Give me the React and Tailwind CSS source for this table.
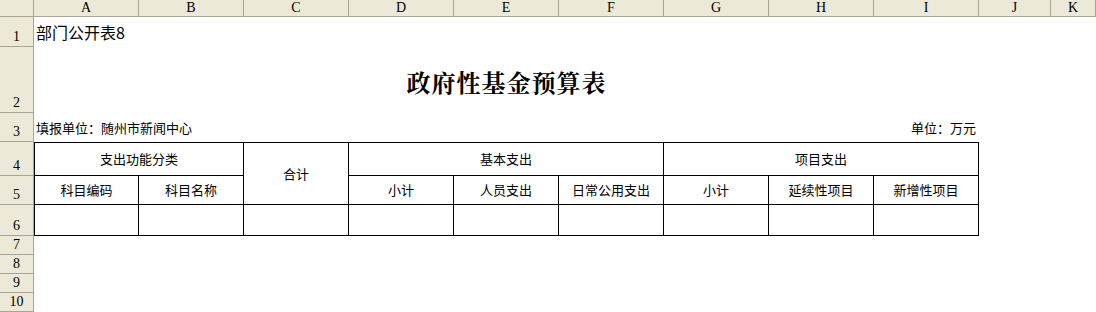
const COLS = ['A', 'B', 'C', 'D', 'E', 'F', 'G', 'H', 'I', 'J', 'K'];
const ROWS = [1, 2, 3, 4, 5, 6, 7, 8, 9, 10];

const cjk = { fontFamily: '"Noto Sans CJK SC", "Noto Sans", sans-serif' };
const head = { fontFamily: '"Liberation Serif", serif' };

function RowHead({ n, row }) {
  return (
    <div
      className={`${row} col-start-1 flex items-end justify-center bg-[#ECE9D8] border-r border-b border-[#A8A595] text-[14px] leading-[16px] text-black pb-[1px]`}
      style={head}
    >
      {n}
    </div>
  );
}

function Cell({ className = '', children }) {
  return (
    <div
      className={`flex items-center justify-center border-r border-b border-black text-[13px] text-black ${className}`}
      style={cjk}
    >
      {children}
    </div>
  );
}

export default function App() {
  const rowClasses = [
    'row-start-2',
    'row-start-3',
    'row-start-4',
    'row-start-5',
    'row-start-6',
    'row-start-7',
    'row-start-8',
    'row-start-9',
    'row-start-10',
    'row-start-11'
  ];

  return (
    <div className="w-[1096px] h-[312px] overflow-hidden bg-white">
      <div className="grid grid-cols-[34px_repeat(9,105px)_72px_1fr] grid-rows-[17px_30px_66px_29px_34px_29px_31px_19px_19px_19px_19px]">
        {/* corner + column headers */}
        <div className="row-start-1 col-start-1 bg-[#ECE9D8] border-r border-b border-[#A8A595]" />
        {COLS.map((c) => (
          <div
            key={c}
            className="row-start-1 flex items-center justify-center bg-[#ECE9D8] border-r border-b border-[#A8A595] text-[14px] leading-none text-black"
            style={head}
          >
            {c}
          </div>
        ))}

        {/* row headers */}
        {ROWS.map((n, i) => (
          <RowHead key={n} n={n} row={rowClasses[i]} />
        ))}

        {/* row 1 */}
        <div
          className="row-start-2 col-start-2 col-span-3 flex items-center pl-[2px] text-[16px] text-black whitespace-nowrap"
          style={cjk}
        >
          部门公开表8
        </div>

        {/* row 2: title */}
        <div className="row-start-3 col-start-2 col-span-9 flex items-center justify-center pt-[4px]">
          <span
            className="text-[24px] font-bold tracking-[1px] text-black"
            style={{ fontFamily: '"Noto Serif CJK SC", "Noto Sans CJK SC", serif' }}
          >
            政府性基金预算表
          </span>
        </div>

        {/* row 3 */}
        <div
          className="row-start-4 col-start-2 col-span-4 flex items-center pl-[2px] pt-[1px] text-[13px] text-black whitespace-nowrap"
          style={cjk}
        >
          填报单位：随州市新闻中心
        </div>
        <div
          className="row-start-4 col-start-9 col-span-2 flex items-center justify-end pr-[3px] pt-[1px] text-[13px] text-black whitespace-nowrap"
          style={cjk}
        >
          单位：万元
        </div>

        {/* table header row 4 */}
        <Cell className="row-start-5 col-start-2 col-span-2 border-t border-l">支出功能分类</Cell>
        <Cell className="row-start-5 row-span-2 col-start-4 border-t">合计</Cell>
        <Cell className="row-start-5 col-start-5 col-span-3 border-t">基本支出</Cell>
        <Cell className="row-start-5 col-start-8 col-span-3 border-t">项目支出</Cell>

        {/* table header row 5 */}
        <Cell className="row-start-6 col-start-2 border-l">科目编码</Cell>
        <Cell className="row-start-6 col-start-3">科目名称</Cell>
        <Cell className="row-start-6 col-start-5">小计</Cell>
        <Cell className="row-start-6 col-start-6">人员支出</Cell>
        <Cell className="row-start-6 col-start-7">日常公用支出</Cell>
        <Cell className="row-start-6 col-start-8">小计</Cell>
        <Cell className="row-start-6 col-start-9">延续性项目</Cell>
        <Cell className="row-start-6 col-start-10">新增性项目</Cell>

        {/* data row 6 */}
        <Cell className="row-start-7 col-start-2 border-l" />
        <Cell className="row-start-7 col-start-3" />
        <Cell className="row-start-7 col-start-4" />
        <Cell className="row-start-7 col-start-5" />
        <Cell className="row-start-7 col-start-6" />
        <Cell className="row-start-7 col-start-7" />
        <Cell className="row-start-7 col-start-8" />
        <Cell className="row-start-7 col-start-9" />
        <Cell className="row-start-7 col-start-10" />
      </div>
    </div>
  );
}
